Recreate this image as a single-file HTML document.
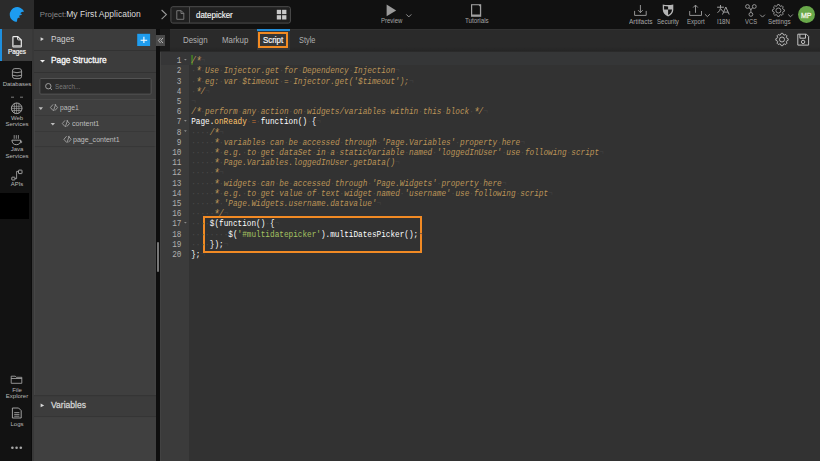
<!DOCTYPE html>
<html><head><meta charset="utf-8">
<style>
*{margin:0;padding:0;box-sizing:border-box}
html,body{width:820px;height:461px;overflow:hidden;background:#111;font-family:"Liberation Sans",sans-serif;position:relative}
.a{position:absolute}
.t{position:absolute;white-space:pre;line-height:1}
/* nav */
#logo{left:0;top:0;width:34px;height:29px;background:#2b2b2b}
#nav{left:0;top:29px;width:32px;height:432px;background:#121212}
#navstrip{left:31px;top:29px;width:1px;height:432px;background:#0c0c0c}
.nl{color:#b8b8b8;font-size:6px;text-align:center;width:34px;left:0}
#pagesnav{left:0;top:29px;width:32px;height:32px;background:#3c3c3c}
#pagesbar{left:0;top:29px;width:1.5px;height:32px;background:#1e90e0}
/* panel */
#panel{left:32px;top:29px;width:124px;height:432px;background:#3c3c3c;border-left:2px solid #383838}
.ph{color:#d4d4d4;font-size:8.4px}
#vstrip{left:156px;top:29px;width:4px;height:432px;background:#0e0e0e}
#thumb{left:156.7px;top:242px;width:2.4px;height:30px;background:#777;border-radius:1.2px}
/* tabs */
#handle{left:160px;top:29px;width:10px;height:22px;background:#1a1a1a}
#tabbar{left:170px;top:29px;width:650px;height:22px;background:linear-gradient(#2a2a2a,#2a2a2a 80%,#252525);border-top:1px solid #323232}
.tab{color:#b0b0b0;font-size:8.6px;transform:scaleX(0.92);transform-origin:0 0}
/* editor */
#gutter{left:160px;top:52px;width:29px;height:409px;background:#3b3b3b}
#code{left:189px;top:52px;width:631px;height:409px;background:#323232}
#topline{left:160px;top:51px;width:660px;height:1px;background:#2a2a2a}
#gedge{left:160px;top:52px;width:1px;height:409px;background:#424242}
#actg{left:160px;top:52px;width:29px;height:12.7px;background:#363637}
#actc{left:189px;top:52px;width:631px;height:12.7px;background:#353637}
.ln{position:absolute;left:160px;width:21.4px;text-align:right;font-family:"Liberation Mono",monospace;font-size:7.72px;color:#b0b0b0;line-height:8.492px;height:8.492px;white-space:pre;transform:scaleY(1.2);transform-origin:0 0}
.cl{position:absolute;left:191.2px;font-family:"Liberation Mono",monospace;font-size:7.72px;color:#fff;line-height:8.492px;height:8.492px;white-space:pre;transform:scaleY(1.2);transform-origin:0 0}
.cl i{font-style:inherit}
.c{color:#BC9458;font-style:italic}
.k{color:#CC7833}
.e{color:#FFC66D}
.s{color:#A5C261}
.d{color:#4a4a4a}
.n{color:#424242;font-style:normal}
.st{display:inline-block;width:4.632px;font-weight:normal;transform:translate(0.2px,1px) scale(1.35);transform-origin:50% 50%}
</style></head><body>
<div class="a" id="logo"></div>
<div class="a" id="nav"></div>
<div class="a" id="navstrip"></div>
<div class="a" id="pagesnav"></div>
<div class="a" id="pagesbar"></div>


<svg class="a" style="left:0;top:0" width="34" height="29" viewBox="0 0 34 29">
<path d="M16.5 22.1 A7.5 7.5 0 1 1 24.1 11.6 Q21.6 11.7 20.2 13.2 Q21.5 13.6 22 14.8 Q20 14.9 18.9 16.1 Q19.8 16.6 19.9 17.6 Q18.2 17.6 17.3 18.7 Q17.4 20.6 16.5 22.1 Z" fill="#1d9cf0"/>
</svg>

<!-- top bar -->
<div class="t" style="left:39.8px;top:10.6px;font-size:7.8px;color:#8a8a8a">Project:</div>
<div class="t" style="left:66.2px;top:10.3px;font-size:8.5px;color:#dcdcdc;letter-spacing:0.05px">My First Application</div>
<svg class="a" style="left:155px;top:0" width="140" height="29" viewBox="155 0 140 29" fill="none">
<path d="M161.6 10 L166.4 14.6 L161.6 19.2" stroke="#9a9a9a" stroke-width="1.1"/>
<rect x="170.9" y="6.7" width="119.5" height="16.4" rx="2" fill="#202020" stroke="#4e4e4e" stroke-width="1"/>
<path d="M189.5 7 V22.8" stroke="#4e4e4e" stroke-width="1"/>
<path d="M176.8 10.7 H181.2 L183.8 13.3 V19.3 H176.8 Z M181 10.7 V13.5 H183.8" stroke="#8c8c8c" stroke-width="0.8"/>
<rect x="276.8" y="9.8" width="4.3" height="4.3" fill="#c8c8c8"/>
<rect x="282.1" y="9.8" width="4.3" height="4.3" fill="#c8c8c8"/>
<rect x="276.8" y="15.2" width="4.3" height="4.3" fill="#c8c8c8"/>
<rect x="282.1" y="15.2" width="4.3" height="4.3" fill="#c8c8c8"/>
</svg>
<div class="t" style="left:195.7px;top:10.8px;font-size:9px;color:#f4f4f4;-webkit-text-stroke:0.15px #f4f4f4;transform:scaleX(0.885);transform-origin:0 0">datepicker</div>
<!-- preview / tutorials -->
<svg class="a" style="left:370px;top:0" width="450" height="29" viewBox="370 0 450 29" fill="none" stroke="#a0a0a0" stroke-width="0.9">
<path d="M386.6 4.4 L396.2 10.4 L386.6 16.3 Z" fill="#9a9a9a" stroke="none"/>
<path d="M406.3 14.4 L408.8 16.9 L411.3 14.4" stroke-width="0.9"/>
<path d="M471 4.2 H481.2 V16.8 H471 Z" fill="#a0a0a0" stroke="none"/>
<path d="M472.2 5.2 H478.6 L479.9 6.4 V14.5 H472.2 Z" fill="#111" stroke="none"/>
<!-- artifacts -->
<path d="M634.6 10.9 V15.4 H646.2 V10.9" />
<path d="M640.4 5 V12.6 M638.1 10.2 L640.4 12.6 L642.7 10.2" />
<!-- security shield -->
<path d="M662.7 4.6 Q668 5.6 673.3 4.6 V10 Q673.1 14.3 668.1 16.4 Q663.1 14.3 662.8 10 Z" fill="#b4b4b4" stroke="none"/>
<path d="M664.1 6.1 Q666 6.5 668.1 6.6 V9.6 H664.1 Z M668.1 9.6 H672 Q671.8 13.4 668.1 15 Z" fill="#111" stroke="none"/>
<!-- export -->
<path d="M689.7 11 V15.4 H701.5 V11" />
<path d="M695.5 12.8 V5.2 M693.2 7.5 L695.5 5.1 L697.8 7.5" />
<path d="M704.9 14.2 L707.4 16.6 L709.9 14.2" />
<!-- i18n -->
<path d="M717.1 7.2 H723.9 M720.5 5 V8.2 Q720.1 11 717.5 12.8 M720.9 9 L723.2 11.8" stroke-width="1"/>
<path d="M722.5 14.5 L725.8 7 L729.2 14.5 M723.6 12.1 H728" stroke-width="1"/>
<!-- vcs -->
<circle cx="747.5" cy="6.5" r="1.9"/>
<circle cx="754.3" cy="6.5" r="1.9"/>
<circle cx="750.9" cy="14.4" r="1.9"/>
<path d="M748.9 7.9 Q750.9 8.5 750.9 10 V12.5 M752.9 7.9 Q750.9 8.5 750.9 10"/>
<path d="M760.1 14.7 L762.5 17.1 L764.9 14.7" />
<!-- settings gear -->
<path d="M776.87 6.16 L777.61 4.55 L779.19 4.55 L779.93 6.16 L780.38 6.35 L782.05 5.74 L783.16 6.85 L782.55 8.52 L782.74 8.97 L784.35 9.71 L784.35 11.29 L782.74 12.03 L782.55 12.48 L783.16 14.15 L782.05 15.26 L780.38 14.65 L779.93 14.84 L779.19 16.45 L777.61 16.45 L776.87 14.84 L776.42 14.65 L774.75 15.26 L773.64 14.15 L774.25 12.48 L774.06 12.03 L772.45 11.29 L772.45 9.71 L774.06 8.97 L774.25 8.52 L773.64 6.85 L774.75 5.74 L776.42 6.35 Z"/>
<circle cx="778.4" cy="10.5" r="2.5"/>
<path d="M788.2 14.5 L790.5 16.8 L792.8 14.5" />
</svg>
<div class="t" style="left:380.8px;top:18.2px;font-size:6.8px;color:#a6a6a6;transform:scaleX(0.885);transform-origin:0 0">Preview</div>
<div class="t" style="left:464.5px;top:18.2px;font-size:6.8px;color:#a6a6a6;transform:scaleX(0.917);transform-origin:0 0">Tutorials</div>
<div class="t" style="left:628.8px;top:18.7px;font-size:6.8px;color:#a6a6a6;transform:scaleX(0.957);transform-origin:0 0">Artifacts</div>
<div class="t" style="left:657.2px;top:18.7px;font-size:6.8px;color:#a6a6a6;transform:scaleX(0.891);transform-origin:0 0">Security</div>
<div class="t" style="left:686.8px;top:18.7px;font-size:6.8px;color:#a6a6a6;transform:scaleX(0.896);transform-origin:0 0">Export</div>
<div class="t" style="left:717px;top:18.5px;font-size:6.8px;color:#a6a6a6;transform:scaleX(0.904);transform-origin:0 0">I18N</div>
<div class="t" style="left:745.3px;top:18.5px;font-size:6.8px;color:#a6a6a6;transform:scaleX(0.864);transform-origin:0 0">VCS</div>
<div class="t" style="left:767.5px;top:18.7px;font-size:6.8px;color:#a6a6a6;transform:scaleX(0.916);transform-origin:0 0">Settings</div>
<div class="a" style="left:798.2px;top:6.4px;width:16.8px;height:16.8px;border-radius:50%;background:#69a84a"></div>
<div class="t" style="left:800.8px;top:11.7px;font-size:7.8px;color:#f4f4e8;-webkit-text-stroke:0.3px #f4f4e8;transform:scaleX(0.9);transform-origin:0 0">MP</div>

<!-- nav icons -->
<svg class="a" style="left:0;top:29px" width="34" height="432" viewBox="0 29 34 432" fill="none" stroke="#b0b0b0" stroke-width="0.9">
<!-- pages -->
<path d="M12.9 37.3 Q12.9 36.6 13.6 36.6 H17.8 L21.3 40.1 V46.5 Q21.3 47 20.8 47 H13.4 Q12.9 47 12.9 46.5 Z" stroke="#ececec" stroke-width="1.2" fill="#2e2e2e"/>
<path d="M17.6 36.7 V39.2 Q17.6 39.9 18.3 39.9 H21.2" stroke="#e8e8e8" stroke-width="1"/>
<rect x="13.4" y="45.2" width="7.5" height="1.4" fill="#c4c4c4" stroke="none"/>
<!-- databases -->
<rect x="12.4" y="68.6" width="9.2" height="10" rx="2.5" stroke="#a8a8a8"/>
<path d="M12.4 71.8 Q17 73.6 21.6 71.8 M12.4 75.2 Q17 77 21.6 75.2" stroke="#a8a8a8"/>
<!-- dashes -->
<path d="M11 97.2 H14 M20 97.2 H23" stroke="#888"/>
<!-- globe -->
<clipPath id="gc"><circle cx="16.7" cy="108.3" r="5.5"/></clipPath>
<circle cx="16.7" cy="108.3" r="5.3" stroke="#b4b4b4" stroke-width="0.9"/>
<path clip-path="url(#gc)" d="M10 106.3 H24 M10 108.4 H24 M10 110.5 H24 M14.4 102 V115 M16.6 102 V115 M18.9 102 V115" stroke="#a8a8a8" stroke-width="0.65"/>
<!-- java -->
<path d="M11.9 140.2 H20.8 Q20.4 144.7 16.35 144.7 Q12.3 144.7 11.9 140.2 Z" stroke="#b0b0b0"/>
<path d="M20.6 140.9 Q22.3 141 21.6 142.6 L20.2 142.9" stroke="#b0b0b0" stroke-width="0.8"/>
<path d="M14.2 135.1 V138.8 M16.3 135.1 V138.8 M18.4 135.1 V138.8" stroke="#a8a8a8" stroke-width="0.8"/>
<!-- apis -->
<rect x="18.5" y="170.1" width="3.5" height="3.5" rx="0.5" stroke="#b0b0b0" stroke-width="0.9"/>
<rect x="11.8" y="177.2" width="3.1" height="2.8" rx="0.4" stroke="#b0b0b0" stroke-width="0.9"/>
<path d="M18.5 171.4 H16.6 V178.6 H14.9" stroke="#b0b0b0" stroke-width="0.8"/>
<!-- folder -->
<path d="M11.2 376.2 H15.2 L16.3 377.3 H21.8 V383.3 H11.2 Z M11.2 378.5 H21.8" stroke="#b0b0b0" stroke-width="0.8"/>
<!-- logs -->
<path d="M12.4 408 H18.6 L21.2 410.6 V418 H12.4 Z" stroke="#b0b0b0" stroke-width="0.9"/>
<path d="M14.2 412.6 H19.4 M14.2 414.4 H19.4 M14.2 416.2 H19.4" stroke="#b0b0b0" stroke-width="0.8"/>
<!-- dots -->
<circle cx="12.4" cy="447.7" r="1.3" fill="#a8a8a8" stroke="none"/>
<circle cx="16.6" cy="447.7" r="1.3" fill="#a8a8a8" stroke="none"/>
<circle cx="20.8" cy="447.7" r="1.3" fill="#a8a8a8" stroke="none"/>
</svg>
<div class="a" style="left:0;top:193px;width:29.3px;height:26px;background:#000"></div>
<div class="t nl" style="top:48.8px;color:#f4f4f4;font-size:6.4px;-webkit-text-stroke:0.2px #f4f4f4">Pages</div>
<div class="t nl" style="top:81px;font-size:6px">Databases</div>
<div class="t nl" style="top:114.6px;font-size:6px">Web</div>
<div class="t nl" style="top:120.8px;font-size:6px">Services</div>
<div class="t nl" style="top:146.3px;font-size:6px">Java</div>
<div class="t nl" style="top:152.7px;font-size:6px">Services</div>
<div class="t nl" style="top:180.8px;font-size:6px">APIs</div>
<div class="t nl" style="top:386.5px;font-size:6px">File</div>
<div class="t nl" style="top:392.7px;font-size:6px">Explorer</div>
<div class="t nl" style="top:421.3px;font-size:6px">Logs</div>

<div class="a" id="panel"></div>
<div class="a" id="vstrip"></div>
<div class="a" id="thumb"></div>
<div class="a" id="handle"></div>
<div class="a" id="tabbar"></div>

<div class="a" id="gutter"></div>
<div class="a" id="code"></div>
<div class="a" id="topline"></div>
<div class="a" id="actg"></div>
<div class="a" id="gedge"></div>
<div class="a" id="actc"></div>


<!-- panel content -->
<div class="a" style="left:34px;top:49.6px;width:122px;height:0.8px;background:#323232"></div>
<div class="a" style="left:34px;top:71.6px;width:122px;height:0.8px;background:#323232"></div>
<svg class="a" style="left:34px;top:29px" width="131" height="432" viewBox="34 29 131 432" fill="none">
<path d="M40.6 37.3 L43.9 39.1 L40.6 40.9 Z" fill="#d8d8d8"/>
<path d="M40 60 L45 60 L42.5 62.6 Z" fill="#f0f0f0"/>
<rect x="137.2" y="33.8" width="12.9" height="12.2" fill="#1f9def"/>
<path d="M143.9 36.8 V43.1 M140.6 40.2 H147.2" stroke="#fff" stroke-width="1.1"/>
<rect x="156" y="35" width="9" height="11" fill="#4a4a4a"/>
<path d="M160.6 37.9 L158.4 40.5 L160.6 43.1 M163 37.9 L160.8 40.5 L163 43.1" stroke="#cfcfcf" stroke-width="0.8"/>
<rect x="39.9" y="78.5" width="111.2" height="15.6" rx="1" fill="#2b2b2b" stroke="#575757" stroke-width="0.9"/>
<circle cx="48.3" cy="86.2" r="2.7" stroke="#a8a8a8" stroke-width="0.9"/>
<path d="M50.2 88.1 L52 89.9" stroke="#a8a8a8" stroke-width="0.9"/>
<rect x="34" y="99.5" width="121.5" height="296" fill="#3f3f3f"/><path d="M34 99.6 H156" stroke="#4c4c4c" stroke-width="0.9"/>
<path d="M34 115.5 H156 M34 131.5 H156 M34 146.6 H156" stroke="#363636" stroke-width="0.8"/>
<path d="M38.6 107.2 L43 107.2 L40.8 109.9 Z" fill="#bdbdbd"/>
<path d="M50.6 122.9 L55 122.9 L52.8 125.6 Z" fill="#bdbdbd"/>
<g stroke="#b4b4b4" stroke-width="0.75" fill="none"><path transform="translate(0,0)" d="M53.1 104.4 L50.4 107.5 L53.1 110.6 M54.9 104.4 L57.6 107.5 L54.9 110.6 M55.7 104.1 L53.5 110.9"/><path transform="translate(11.9,16)" d="M53.1 104.4 L50.4 107.5 L53.1 110.6 M54.9 104.4 L57.6 107.5 L54.9 110.6 M55.7 104.1 L53.5 110.9"/><path transform="translate(13.5,31.8)" d="M53.1 104.4 L50.4 107.5 L53.1 110.6 M54.9 104.4 L57.6 107.5 L54.9 110.6 M55.7 104.1 L53.5 110.9"/></g>
<path d="M34.5 100 V395 M155.2 100 V395" stroke="#474747" stroke-width="0.8"/>
<path d="M34 395.6 H156" stroke="#343434" stroke-width="0.9"/>
<rect x="34" y="417" width="122" height="50" fill="#404040"/><path d="M34 416.6 H156" stroke="#353535" stroke-width="1"/>
<path d="M40.6 403.5 L44.2 405.4 L40.6 407.3 Z" fill="#d8d8d8"/>
</svg>
<div class="t ph" style="left:51.4px;top:34.7px;font-size:9px;color:#cfcfcf;transform:scaleX(0.917);transform-origin:0 0">Pages</div>
<div class="t ph" style="left:51.3px;top:56.3px;font-size:9px;color:#f6f6f6;-webkit-text-stroke:0.35px #f6f6f6;transform:scaleX(0.925);transform-origin:0 0">Page Structure</div>
<div class="t" style="left:54.7px;top:83.4px;font-size:7px;color:#7a7a7a;transform:scaleX(0.9);transform-origin:0 0">Search...</div>
<div class="t" style="left:59.6px;top:104.4px;font-size:7.5px;color:#bdbdbd;transform:scaleX(0.9);transform-origin:0 0">page1</div>
<div class="t" style="left:71.9px;top:120.2px;font-size:7.5px;color:#bdbdbd;transform:scaleX(0.95);transform-origin:0 0">content1</div>
<div class="t" style="left:72.5px;top:136px;font-size:7.5px;color:#bdbdbd;transform:scaleX(0.94);transform-origin:0 0">page_content1</div>
<div class="t ph" style="left:51.4px;top:400.8px;font-size:9.3px;color:#d4d4d4;-webkit-text-stroke:0.3px #d4d4d4;transform:scaleX(0.92);transform-origin:0 0">Variables</div>
<!-- tabs -->
<div class="a" style="left:257px;top:29px;width:33px;height:21px;background:#363636"></div>
<div class="a" style="left:257px;top:29px;width:33px;height:2px;background:#238cd6"></div>
<div class="a" style="left:257.9px;top:32px;width:30.2px;height:15.6px;border:2.3px solid #f38b22"></div>
<div class="t tab" style="left:183px;top:36.2px">Design</div>
<div class="t tab" style="left:222px;top:36.2px">Markup</div>
<div class="t tab" style="left:263.1px;top:36.2px;color:#f6f6f6;-webkit-text-stroke:0.2px #f6f6f6">Script</div>
<div class="t tab" style="left:298.7px;top:36.2px;transform:scaleX(0.86)">Style</div>
<svg class="a" style="left:770px;top:29px" width="50" height="22" viewBox="770 29 50 22" fill="none" stroke="#c4c4c4" stroke-width="0.9">
<path d="M780.40 34.97 L781.18 33.35 L782.82 33.35 L783.60 34.97 L784.07 35.17 L785.77 34.58 L786.92 35.73 L786.33 37.43 L786.53 37.90 L788.15 38.68 L788.15 40.32 L786.53 41.10 L786.33 41.57 L786.92 43.27 L785.77 44.42 L784.07 43.83 L783.60 44.03 L782.82 45.65 L781.18 45.65 L780.40 44.03 L779.93 43.83 L778.23 44.42 L777.08 43.27 L777.67 41.57 L777.47 41.10 L775.85 40.32 L775.85 38.68 L777.47 37.90 L777.67 37.43 L777.08 35.73 L778.23 34.58 L779.93 35.17 Z"/>
<circle cx="782" cy="39.5" r="2.5"/>
<path d="M797.8 34.2 H806.4 L808.6 36.4 V45.1 H797.8 Z" stroke-linejoin="round" stroke-width="1"/>
<path d="M799.9 34.2 V38.2 H805.5 V34.2" stroke-width="1"/>
<circle cx="803.1" cy="41.9" r="1.7" stroke-width="1"/>
</svg>
<!-- orange code box -->
<div class="a" style="left:202.6px;top:215.7px;width:219px;height:37.5px;border:2.6px solid #f28a24"></div>


<svg class="a" style="left:180px;top:52px" width="15" height="200" viewBox="180 52 15 200">
<path d="M184 59 H186.8 L185.4 60.6 Z M184 120.1 H186.8 L185.4 121.7 Z M184 130.3 H186.8 L185.4 131.9 Z M184 222 H186.8 L185.4 223.6 Z" fill="#8a8a8a"/>
<rect x="191.2" y="55" width="1.7" height="9.7" fill="#427a25"/>
</svg>
<div id="codewrap">
<div class="cl" style="top:56.30px"><span class="c">/<b class="st">*</b></span><i class="n">¬</i></div>
<div class="ln" style="top:56.30px">1</div>
<div class="cl" style="top:66.49px"><span class="c"><i class="d">·</i><b class="st">*</b><i class="d">·</i>Use<i class="d">·</i>Injector.get<i class="d">·</i>for<i class="d">·</i>Dependency<i class="d">·</i>Injection</span><i class="n">¬</i></div>
<div class="ln" style="top:66.49px">2</div>
<div class="cl" style="top:76.68px"><span class="c"><i class="d">·</i><b class="st">*</b><i class="d">·</i>eg:<i class="d">·</i>var<i class="d">·</i>$timeout<i class="d">·</i>=<i class="d">·</i>Injector.get(&#x27;$timeout&#x27;);</span><i class="n">¬</i></div>
<div class="ln" style="top:76.68px">3</div>
<div class="cl" style="top:86.87px"><span class="c"><i class="d">·</i><b class="st">*</b>/</span><i class="n">¬</i></div>
<div class="ln" style="top:86.87px">4</div>
<div class="cl" style="top:97.06px"><i class="n">¬</i></div>
<div class="ln" style="top:97.06px">5</div>
<div class="cl" style="top:107.25px"><span class="c">/<b class="st">*</b><i class="d">·</i>perform<i class="d">·</i>any<i class="d">·</i>action<i class="d">·</i>on<i class="d">·</i>widgets/variables<i class="d">·</i>within<i class="d">·</i>this<i class="d">·</i>block<i class="d">·</i><b class="st">*</b>/</span><i class="n">¬</i></div>
<div class="ln" style="top:107.25px">6</div>
<div class="cl" style="top:117.44px">Page.<span class="e">onReady</span><i class="d">·</i><span class="k">=</span><i class="d">·</i>function()<i class="d">·</i>{<i class="n">¬</i></div>
<div class="ln" style="top:117.44px">7</div>
<div class="cl" style="top:127.63px"><span class="c"><i class="d">·</i><i class="d">·</i><i class="d">·</i><i class="d">·</i>/<b class="st">*</b></span><i class="n">¬</i></div>
<div class="ln" style="top:127.63px">8</div>
<div class="cl" style="top:137.82px"><span class="c"><i class="d">·</i><i class="d">·</i><i class="d">·</i><i class="d">·</i><i class="d">·</i><b class="st">*</b><i class="d">·</i>variables<i class="d">·</i>can<i class="d">·</i>be<i class="d">·</i>accessed<i class="d">·</i>through<i class="d">·</i>&#x27;Page.Variables&#x27;<i class="d">·</i>property<i class="d">·</i>here</span><i class="n">¬</i></div>
<div class="ln" style="top:137.82px">9</div>
<div class="cl" style="top:148.01px"><span class="c"><i class="d">·</i><i class="d">·</i><i class="d">·</i><i class="d">·</i><i class="d">·</i><b class="st">*</b><i class="d">·</i>e.g.<i class="d">·</i>to<i class="d">·</i>get<i class="d">·</i>dataSet<i class="d">·</i>in<i class="d">·</i>a<i class="d">·</i>staticVariable<i class="d">·</i>named<i class="d">·</i>&#x27;loggedInUser&#x27;<i class="d">·</i>use<i class="d">·</i>following<i class="d">·</i>script</span><i class="n">¬</i></div>
<div class="ln" style="top:148.01px">10</div>
<div class="cl" style="top:158.20px"><span class="c"><i class="d">·</i><i class="d">·</i><i class="d">·</i><i class="d">·</i><i class="d">·</i><b class="st">*</b><i class="d">·</i>Page.Variables.loggedInUser.getData()</span><i class="n">¬</i></div>
<div class="ln" style="top:158.20px">11</div>
<div class="cl" style="top:168.39px"><span class="c"><i class="d">·</i><i class="d">·</i><i class="d">·</i><i class="d">·</i><i class="d">·</i><b class="st">*</b></span><i class="n">¬</i></div>
<div class="ln" style="top:168.39px">12</div>
<div class="cl" style="top:178.58px"><span class="c"><i class="d">·</i><i class="d">·</i><i class="d">·</i><i class="d">·</i><i class="d">·</i><b class="st">*</b><i class="d">·</i>widgets<i class="d">·</i>can<i class="d">·</i>be<i class="d">·</i>accessed<i class="d">·</i>through<i class="d">·</i>&#x27;Page.Widgets&#x27;<i class="d">·</i>property<i class="d">·</i>here</span><i class="n">¬</i></div>
<div class="ln" style="top:178.58px">13</div>
<div class="cl" style="top:188.77px"><span class="c"><i class="d">·</i><i class="d">·</i><i class="d">·</i><i class="d">·</i><i class="d">·</i><b class="st">*</b><i class="d">·</i>e.g.<i class="d">·</i>to<i class="d">·</i>get<i class="d">·</i>value<i class="d">·</i>of<i class="d">·</i>text<i class="d">·</i>widget<i class="d">·</i>named<i class="d">·</i>&#x27;username&#x27;<i class="d">·</i>use<i class="d">·</i>following<i class="d">·</i>script</span><i class="n">¬</i></div>
<div class="ln" style="top:188.77px">14</div>
<div class="cl" style="top:198.96px"><span class="c"><i class="d">·</i><i class="d">·</i><i class="d">·</i><i class="d">·</i><i class="d">·</i><b class="st">*</b><i class="d">·</i>&#x27;Page.Widgets.username.datavalue&#x27;</span><i class="n">¬</i></div>
<div class="ln" style="top:198.96px">15</div>
<div class="cl" style="top:209.15px"><span class="c"><i class="d">·</i><i class="d">·</i><i class="d">·</i><i class="d">·</i><i class="d">·</i><b class="st">*</b>/</span><i class="n">¬</i></div>
<div class="ln" style="top:209.15px">16</div>
<div class="cl" style="top:219.34px"><i class="d">·</i><i class="d">·</i><i class="d">·</i><i class="d">·</i>$(function()<i class="d">·</i>{<i class="n">¬</i></div>
<div class="ln" style="top:219.34px">17</div>
<div class="cl" style="top:229.53px"><i class="d">·</i><i class="d">·</i><i class="d">·</i><i class="d">·</i><i class="d">·</i><i class="d">·</i><i class="d">·</i><i class="d">·</i>$(<span class="s">&#x27;#multidatepicker&#x27;</span>).multiDatesPicker();<i class="n">¬</i></div>
<div class="ln" style="top:229.53px">18</div>
<div class="cl" style="top:239.72px"><i class="d">·</i><i class="d">·</i><i class="d">·</i><i class="d">·</i>});<i class="n">¬</i></div>
<div class="ln" style="top:239.72px">19</div>
<div class="cl" style="top:249.91px">};<i class="n">¬</i></div>
<div class="ln" style="top:249.91px">20</div>
</div>
</body></html>
